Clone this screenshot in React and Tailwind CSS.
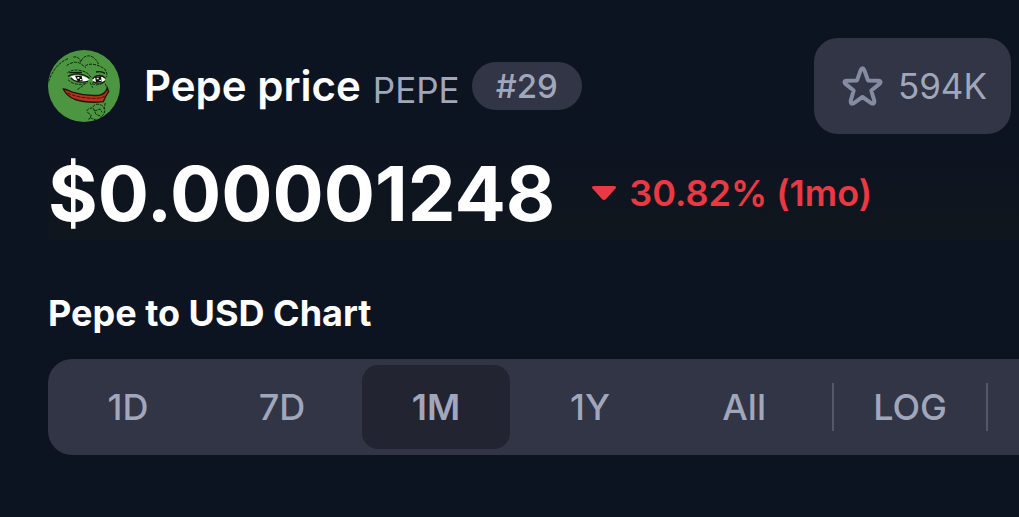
import { useState } from "react";

const ranges = ["1D", "7D", "1M", "1Y", "All"];

function PepeLogo() {
    return (
        <svg className="size-[72px] shrink-0" viewBox="24 29 216 216" role="img" aria-label="Pepe">
            <clipPath id="coin">
                <circle cx="132" cy="137" r="108" />
            </clipPath>
            <g clipPath="url(#coin)">
                <rect x="24" y="29" width="216" height="216" fill="#4c9641" />
                {/* head outline and wrinkles */}
                <g fill="none" stroke="#14260f" strokeWidth="3" strokeDasharray="9 3">
                    <path d="M26 124C36 92 56 66 84 55" />
                    <path d="M100 50C112 48 120 54 122 66M124 62C130 45 150 42 162 53C170 60 174 66 176 74" />
                    <path d="M80 76C92 66 108 62 122 70L138 82" />
                    <path d="M136 76C150 68 170 70 194 86C200 94 202 102 200 110" />
                    <path d="M82 98C94 86 120 86 142 98L154 112" />
                    <path d="M84 118C96 132 120 136 142 128" />
                    <path d="M156 130C168 136 186 134 196 122" />
                    <path d="M112 148L134 132M150 126L158 142M196 130L202 146" />
                    <path d="M140 212C148 198 158 208 160 198C166 188 184 190 192 202C198 212 192 224 180 232" />
                    <path d="M160 204L168 222L184 228M142 216L154 224L146 238M164 212L180 206L186 216" />
                    <path d="M196 188L192 206M150 232L170 240" />
                </g>
                {/* eyes */}
                <path d="M90 110C102 102 132 103 147 117C142 126 120 128 108 124C100 121 94 114 90 110Z" fill="#fff" />
                <path d="M158 118C168 105 186 105 196 116C194 127 168 130 158 124Z" fill="#fff" />
                <path d="M105 106L125 106L128 123L113 123Z" fill="#0c120b" />
                <path d="M165 109L183 108L185 125L168 126Z" fill="#0c120b" />
                <path d="M112 110h6v5h-6zM120 116h5v4h-5zM170 112h6v5h-6zM178 118h5v4h-5z" fill="#fff" />
                <path d="M84 108C100 97 130 98 148 114M92 112C102 125 124 128 144 123M158 116C166 103 186 102 197 114M158 124C168 130 188 130 194 123M168 95C180 92 188 94 195 99M88 97L126 96" fill="none" stroke="#101b0d" strokeWidth="4" />
                {/* mouth */}
                <path d="M70 146C80 146 88 152 100 156C122 163 150 167 176 165C190 163 198 157 202 143L206 154C198 164 194 174 190 184C164 187 128 185 102 176C86 169 76 160 70 146Z" fill="#b8331c" stroke="#281309" strokeWidth="4" />
                <path d="M82 158C100 167 126 172 154 174C173 175 184 173 194 168" fill="none" stroke="#4a150a" strokeWidth="3" strokeDasharray="12 3" />
            </g>
        </svg>
    );
}

export default function App() {
    const [range, setRange] = useState("1M");

    return (
        <main className="min-h-screen overflow-hidden bg-[#0d1421] pt-[38px] pl-12 font-['Inter',sans-serif] text-4xl text-[#a1a7bb]">
            <header className="flex h-24 items-center pr-2">
                <PepeLogo />
                <h1 className="ml-6 flex items-end whitespace-nowrap">
                    <span className="text-[42px] leading-[48px] font-semibold text-white">Pepe price</span>
                    <span className="ml-3 text-[35px] leading-10">PEPE</span>
                </h1>
                <span className="ml-3 flex h-12 items-center rounded-full bg-[#323546] px-6 text-[33px] font-medium">#29</span>
                <button className="ml-auto flex h-24 items-center gap-3 rounded-3xl bg-[#323546] px-6 text-[35px]">
                    <svg className="size-12" viewBox="0 0 48 48" fill="none" stroke="#858ca2" strokeWidth="4" strokeLinejoin="round" aria-hidden="true">
                        <path d="M22.7 8.1Q24.5 4.6 26.3 8.1L30 18.4L40.6 18.7Q44 19.2 41.5 21.9L33.3 28.5L36.3 38.8Q36.8 42.8 33.2 41.1L24.5 35L15.8 41.1Q12.2 42.8 12.7 38.8L15.7 28.5L7.5 21.9Q5 19.2 8.4 18.7L19 18.4Z" />
                    </svg>
                    594K
                </button>
            </header>

            <section className="mt-3 flex h-[94px] items-center bg-linear-to-b from-[#0d1421] to-[#10161d] whitespace-nowrap">
                <span className="text-[76px] leading-none font-bold text-white">$0.00001248</span>
                <p className="ml-9 flex items-center font-semibold text-[#ea3943]">
                    <svg className="mr-3 h-4 w-[26px]" viewBox="0 0 26 16" fill="currentColor" aria-hidden="true">
                        <path d="M3 1H23Q26 1 24.5 3.5L15 14Q13 16 11 14L1.5 3.5Q0 1 3 1Z" />
                    </svg>
                    30.82% (1mo)
                </p>
            </section>

            <h2 className="mt-[52px] leading-[42px] font-bold text-white">Pepe to USD Chart</h2>

            <div className="mt-[25px] flex h-24 items-center rounded-l-3xl bg-[#323546] font-medium">
                <div className="flex flex-1 gap-1.5 p-1.5">
                    {ranges.map((item) => (
                        <button
                            key={item}
                            aria-pressed={item === range}
                            onClick={() => setRange(item)}
                            className={item === range ? "h-[84px] flex-1 rounded-2xl bg-[#222531] font-semibold" : "h-[84px] flex-1 rounded-2xl"}
                        >
                            {item}
                        </button>
                    ))}
                </div>
                <button className="ml-2 h-12 border-x-2 border-[#53576a] px-[39px]">LOG</button>
                <div className="w-[31px]" />
            </div>
        </main>
    );
}
